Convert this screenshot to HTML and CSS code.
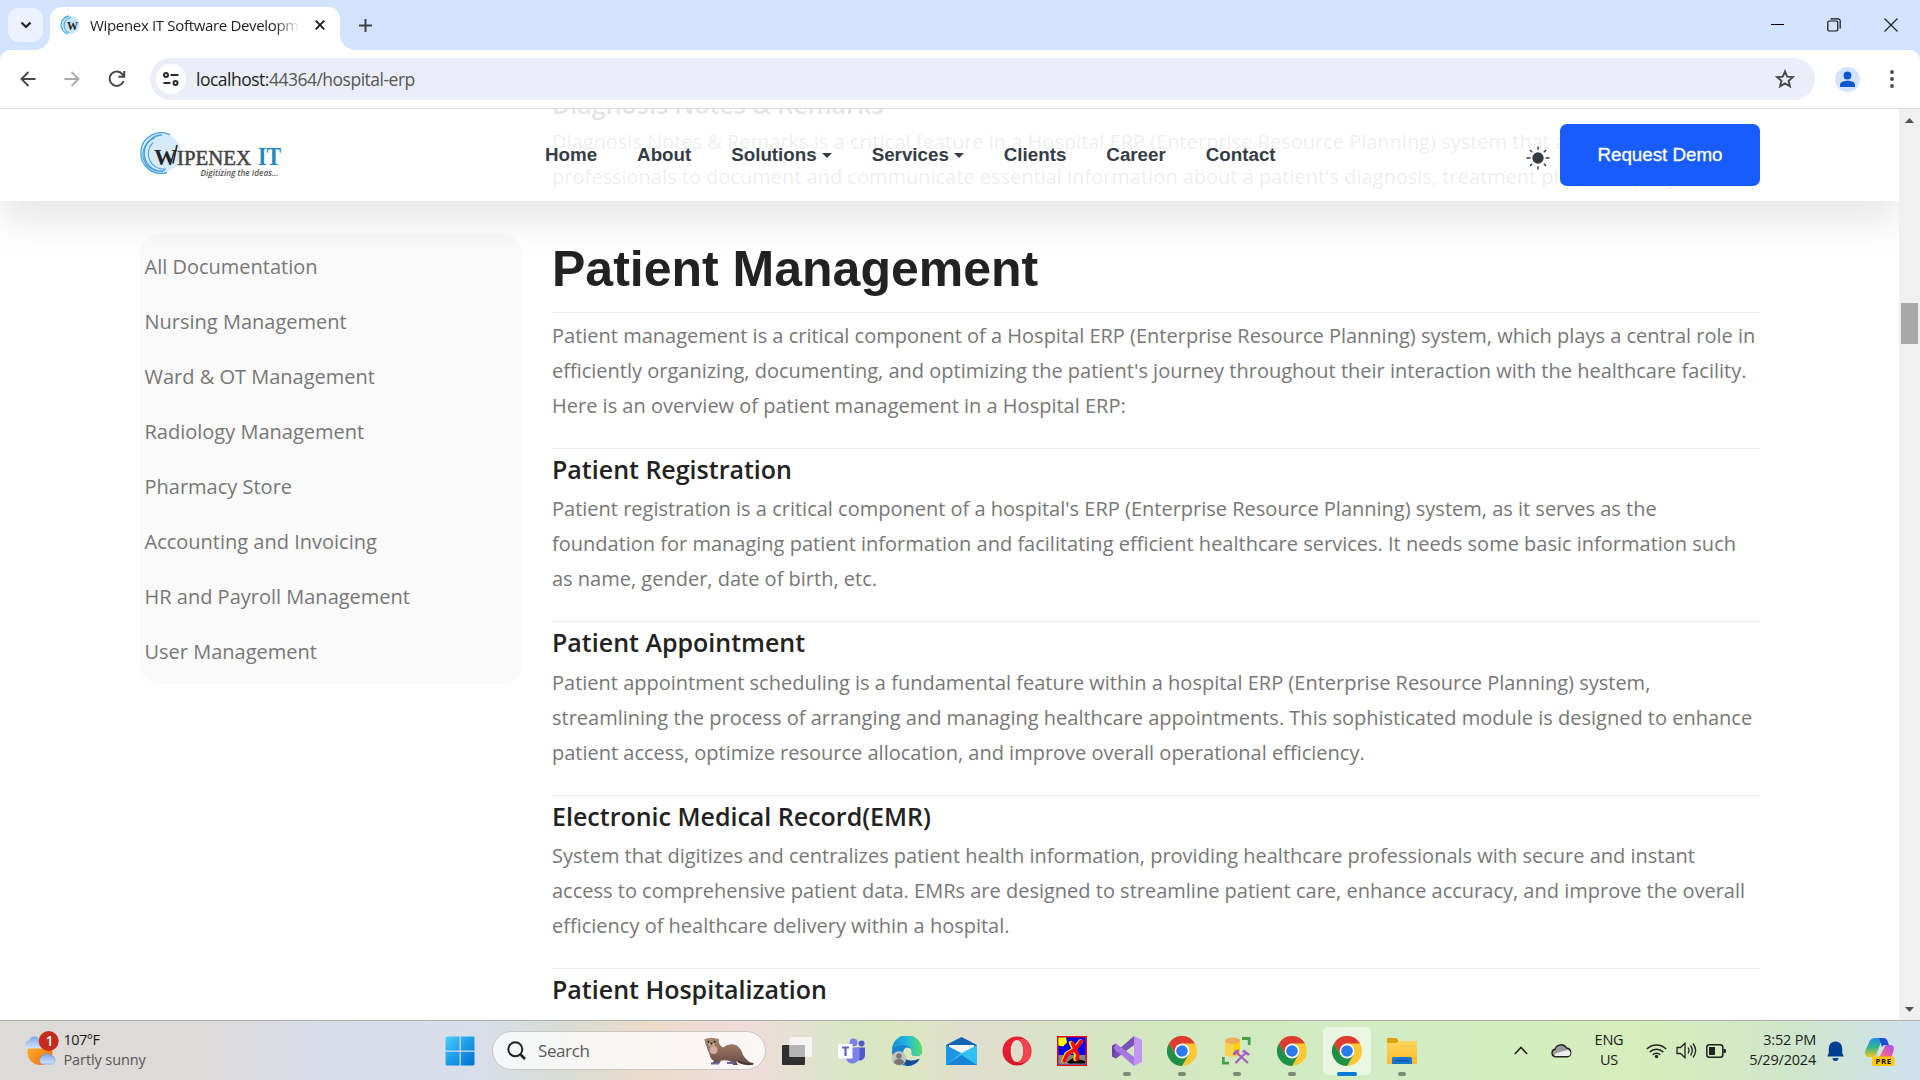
FILE: index.html
```html
<!DOCTYPE html>
<html lang="en">
<head>
<meta charset="utf-8">
<title>Wipenex IT Software Development</title>
<link rel="stylesheet" href="styles.css">
</head>
<body>
<svg width="0" height="0" class="defs">
  <defs>
    <linearGradient id="gWin" x1="0" y1="0" x2="1" y2="1"><stop offset="0" stop-color="#4cd0fc"/><stop offset=".5" stop-color="#1c9be8"/><stop offset="1" stop-color="#0070d0"/></linearGradient>
    <linearGradient id="gOpera" x1="0" y1="0" x2="1" y2="1"><stop offset="0" stop-color="#f8203a"/><stop offset=".5" stop-color="#e0182c"/><stop offset="1" stop-color="#b81020"/></linearGradient>
    <linearGradient id="gEdge" x1="0" y1="0" x2="1" y2="0"><stop offset="0" stop-color="#1a90d8"/><stop offset=".5" stop-color="#22b8dc"/><stop offset="1" stop-color="#58e060"/></linearGradient>
    <linearGradient id="gSun" x1="0" y1="0" x2="1" y2="1"><stop offset="0" stop-color="#fbb82c"/><stop offset="1" stop-color="#f06a10"/></linearGradient>
    <linearGradient id="gCloud" x1="0" y1="0" x2="0" y2="1"><stop offset="0" stop-color="#7ba6e8"/><stop offset="1" stop-color="#d3e3fb"/></linearGradient>
    <linearGradient id="gFolder" x1="0" y1="0" x2="0" y2="1"><stop offset="0" stop-color="#ffd75e"/><stop offset="1" stop-color="#fbb92a"/></linearGradient>
    <linearGradient id="gCop1" x1="0" y1="0" x2="0" y2="1"><stop offset="0" stop-color="#1f8ee8"/><stop offset=".5" stop-color="#35b58c"/><stop offset="1" stop-color="#f4c814"/></linearGradient>
    <linearGradient id="gCop2" x1="1" y1="0" x2="0" y2="1"><stop offset="0" stop-color="#a050f0"/><stop offset=".5" stop-color="#e858a8"/><stop offset="1" stop-color="#ff8a50"/></linearGradient>
    <linearGradient id="gOtter" x1="0" y1="0" x2="0" y2="1"><stop offset="0" stop-color="#ab866c"/><stop offset="1" stop-color="#654a45"/></linearGradient>
    <symbol id="chrome" viewBox="0 0 30 30">
      <circle cx="15" cy="15" r="15" fill="#fcc934"/>
      <path d="M15 15V7.5H28A15 15 0 0 0 2 7.5L8.5 18.8Z" fill="#dd3c30"/>
      <path d="M2 7.5A15 15 0 0 0 15 30L21.5 18.8 15 15 8.5 18.8Z" fill="#1e9048"/>
      <circle cx="15" cy="15" r="7.4" fill="#fff"/><circle cx="15" cy="15" r="5.8" fill="#2b79ee"/>
    </symbol>
  </defs>
</svg>

<div class="tabstrip">
  <div class="tab-search"><svg width="12" height="8" viewBox="0 0 12 8"><path d="M1.5 1.5 6 6l4.500-4.500" fill="none" stroke="#1f1f1f" stroke-width="2.200"/></svg></div>
  <div class="tab">
    <svg class="favicon" width="20" height="20" viewBox="0 0 20 20"><circle cx="10.500" cy="10" r="9" fill="#c5e6f8"/><path d="M9 .8A9.300 9.300 0 0 0 8 19M11 2.500A8 8 0 0 0 9.500 18" fill="none" stroke="#49abe0" stroke-width="1.200"/><text x="7" y="14.500" font-family="Liberation Serif" font-size="12" font-weight="bold" textLength="11" lengthAdjust="spacingAndGlyphs" fill="#222">W</text></svg>
    <span class="tab-title">Wipenex IT Software Development</span>
    <svg width="10" height="10" viewBox="0 0 10 10"><path d="M.7.700l8.600 8.600M9.300.7.7 9.300" stroke="#1f1f1f" stroke-width="1.900"/></svg>
  </div>
  <svg class="newtab" width="13" height="13" viewBox="0 0 13 13"><path d="M6.500 0v13M0 6.500h13" stroke="#3c3f43" stroke-width="1.900"/></svg>
  <div class="winbtns">
    <svg width="13" height="13" viewBox="0 0 13 13"><path d="M0 6.500h13" stroke="#000"/></svg>
    <svg width="14" height="14" viewBox="0 0 14 14" fill="none" stroke="#111" stroke-width="1.200"><rect x=".8" y="3" width="10" height="10" rx="1.500"/><path d="M3.500.8H11a2.200 2.200 0 0 1 2.200 2.200v7.500"/></svg>
    <svg width="14" height="14" viewBox="0 0 14 14"><path d="M.5.500l13 13M13.500.500l-13 13" stroke="#222" stroke-width="1.200"/></svg>
  </div>
</div>

<div class="toolbar-wrap"><div class="toolbar">
  <svg width="16" height="16" viewBox="0 0 16 16" fill="none" stroke="#45474a" stroke-width="1.900"><path d="M15.500 8H2M8.500 1 1.500 8l7 7"/></svg>
  <svg width="16" height="16" viewBox="0 0 16 16" fill="none" stroke="#a9aaac" stroke-width="1.900"><path d="M.5 8H14M7.500 1l7 7-7 7"/></svg>
  <svg width="18" height="18" viewBox="0 0 18 18" fill="none" stroke="#45474a" stroke-width="2"><path d="M15.600 11A7.200 7.200 0 1 1 14.500 4.300L16 6.200"/><path d="M16.200 1v5.800h-5.800"/></svg>
  <div class="omnibox">
    <div class="site-info"><svg width="16" height="14" viewBox="0 0 16 14" fill="none" stroke="#2a2b2d" stroke-width="2"><circle cx="3" cy="3" r="2"/><path d="M7.500 3H15.500M.5 11h7"/><circle cx="12.500" cy="11" r="2"/></svg></div>
    <span class="url">localhost:<i>44364/hospital-erp</i></span>
    <svg class="star" width="20" height="20" viewBox="0 0 20 20"><path d="M10 2.500 12.200 7.600 17.800 8.100 13.600 11.800 14.900 17.300 10 14.400 5.100 17.300 6.400 11.800 2.200 8.100 7.800 7.600Z" fill="none" stroke="#45474a" stroke-width="1.900"/></svg>
  </div>
  <svg class="avatar" width="25" height="25" viewBox="0 0 25 25"><circle cx="12.500" cy="12.500" r="12.500" fill="#d3e3fd"/><circle cx="12.500" cy="8.500" r="3.900" fill="#0b57d0"/><path d="M5 20v-2c0-3 4-4.300 7.500-4.300S20 15 20 18v2Z" fill="#0b57d0"/></svg>
  <svg class="kebab" width="4" height="18" viewBox="0 0 4 18" fill="#45474a"><circle cx="2" cy="2" r="1.900"/><circle cx="2" cy="9" r="1.900"/><circle cx="2" cy="16" r="1.900"/></svg>
</div></div>

<div class="viewport">
  <div class="page">
    <header class="site-header">
      <svg class="logo" width="146" height="50" viewBox="0 0 146 50">
        <circle cx="21.500" cy="21" r="19.500" fill="#d5ebfa"/>
        <g fill="none" stroke="#4aa3dc"><path d="M30 2.800A20.300 20.300 0 1 0 27 40.500" stroke-width="1.400"/><path d="M22 3A18 18 0 0 0 23 39.500" stroke-width="1.300"/><path d="M15 6A17 17 0 0 0 25 38.500" stroke-width="1.200"/><path d="M13 10.500A15.500 15.500 0 0 0 26 37" stroke-width="1.100"/></g>
        <path d="M33 31.500 37 13" stroke="#222" stroke-width="1.500"/>
        <text class="lg" x="14" y="32.500" font-size="24" font-weight="bold" textLength="23" lengthAdjust="spacingAndGlyphs" fill="#262626">W</text>
        <text class="lg" x="37" y="32.500" font-size="20.500" textLength="74" lengthAdjust="spacingAndGlyphs" fill="#444" stroke="#444" stroke-width=".5">IPENEX</text>
        <text class="lg" x="118" y="32.500" font-size="25" font-weight="bold" textLength="23" lengthAdjust="spacingAndGlyphs" fill="#2089c4">IT</text>
        <text x="60.500" y="43.500" font-family="Open Sans" font-size="8" font-style="italic" font-weight="600" textLength="78" lengthAdjust="spacingAndGlyphs" fill="#555">Digitizing the Ideas...</text>
      </svg>
      <nav class="nav"><a>Home</a><a>About</a><a class="drop">Solutions</a><a class="drop">Services</a><a>Clients</a><a>Career</a><a>Contact</a></nav>
      <svg class="sun" width="24" height="24" viewBox="0 0 24 24"><circle cx="12" cy="12" r="5.700" fill="#343d46"/><path d="M12 .5v3.200M12 20.300v3.200M.5 12h4M19.500 12h4M3.900 3.900l2.300 2.300M17.800 17.800l2.300 2.300M3.900 20.100l2.300-2.300M17.800 6.200l2.300-2.300" stroke="#343d46" stroke-width="1.400"/></svg>
      <a class="demo">Request Demo</a>
    </header>
    <div class="container">
      <aside class="sidebar">
        <a>All Documentation</a><a>Nursing Management</a><a>Ward &amp; OT Management</a><a>Radiology Management</a><a>Pharmacy Store</a><a>Accounting and Invoicing</a><a>HR and Payroll Management</a><a>User Management</a>
      </aside>
      <main class="content">
        <section class="previous"><h3>Diagnosis Notes &amp; Remarks</h3>
          <p>Diagnosis Notes &amp; Remarks is a critical feature in a Hospital ERP (Enterprise Resource Planning) system that allows<br>professionals to document and communicate essential information about a patient's diagnosis, treatment plan, and progress.</p></section>
        <h1>Patient Management</h1>
        <section class="intro"><p>Patient management is a critical component of a Hospital ERP (Enterprise Resource Planning) system, which plays a central role in<br>efficiently organizing, documenting, and optimizing the patient's journey throughout their interaction with the healthcare facility.<br>Here is an overview of patient management in a Hospital ERP:</p></section>
        <section><h2>Patient Registration</h2>
          <p>Patient registration is a critical component of a hospital's ERP (Enterprise Resource Planning) system, as it serves as the<br>foundation for managing patient information and facilitating efficient healthcare services. It needs some basic information such<br>as name, gender, date of birth, etc.</p></section>
        <section><h2>Patient Appointment</h2>
          <p>Patient appointment scheduling is a fundamental feature within a hospital ERP (Enterprise Resource Planning) system,<br>streamlining the process of arranging and managing healthcare appointments. This sophisticated module is designed to enhance<br>patient access, optimize resource allocation, and improve overall operational efficiency.</p></section>
        <section><h2>Electronic Medical Record(EMR)</h2>
          <p>System that digitizes and centralizes patient health information, providing healthcare professionals with secure and instant<br>access to comprehensive patient data. EMRs are designed to streamline patient care, enhance accuracy, and improve the overall<br>efficiency of healthcare delivery within a hospital.</p></section>
        <section><h2>Patient Hospitalization</h2></section>
      </main>
    </div>
  </div>
  <div class="scrollbar">
    <svg width="9" height="5" viewBox="0 0 9 5"><path d="M0 5 4.500 0 9 5Z" fill="#505050"/></svg>
    <div class="thumb"></div>
    <svg width="9" height="5" viewBox="0 0 9 5"><path d="M0 0 4.500 5 9 0Z" fill="#505050"/></svg>
  </div>
</div>

<footer class="taskbar">
  <div class="weather">
    <svg width="34" height="36" viewBox="0 0 34 36"><circle cx="15" cy="21.500" r="12.500" fill="url(#gSun)"/><path d="M4.500 17.500a4 4 0 0 1-.5-8 5.500 5.500 0 0 1 10-1.500 5 5 0 0 1 3 9.500Z" fill="url(#gCloud)"/><path d="M17 33a4 4 0 0 1 0-7.500 5.500 5.500 0 0 1 9-1 4.500 4.500 0 0 1 1.500 8.500Z" fill="url(#gCloud)" stroke="#6e98de" stroke-width=".6"/><circle cx="23.700" cy="10" r="10" fill="#c42b1c"/><text x="20.800" y="15" font-family="Open Sans" font-size="13.500" font-weight="600" fill="#fff">1</text></svg>
    <div class="weather-text"><b>107°F</b><span>Partly sunny</span></div>
  </div>
  <div class="cell"><svg width="30" height="30" viewBox="0 0 30 30" fill="url(#gWin)"><path d="M2 .5h12.500v14H.5V2Q.5.500 2 .500ZM15.700.500H28Q29.500.500 29.500 2v12.500H15.700ZM.5 15.700h14v13.800H2Q.5 29.500.5 28ZM15.700 15.700h13.800V28q0 1.500-1.500 1.500H15.700Z"/></svg></div>
  <div class="search">
    <svg width="19" height="19" viewBox="0 0 19 19" fill="none" stroke="#222" stroke-width="2"><circle cx="8.300" cy="8.300" r="7"/><path d="M13 13l5 5" stroke-width="2.600"/></svg>
    <span>Search</span>
    <svg class="otter" width="52" height="30" viewBox="0 0 52 30"><path d="M2 4Q0 2 3 1.800Q8 0 13 1.600Q17 1 15.500 4.500Q17 9 20 10.500Q26 5.500 33 8Q38 11 40 18Q44 25 51 26.500Q49 29.500 41 27.500Q36 26.500 33 24L35 28H30L27 24Q23 23 18 23.500L16 27H8L11 24Q7 22 6.500 17Q4 12 3.500 9Q2 7 2 4Z" fill="url(#gOtter)"/><ellipse cx="10.500" cy="13" rx="4" ry="4" fill="#d4aba0"/><ellipse cx="8.600" cy="7" rx="3.500" ry="2.800" fill="#bda08c"/><circle cx="5.500" cy="4.800" r=".9"/><circle cx="11.500" cy="4.800" r=".9"/><path d="M7 5.500h3L8.500 8Z" fill="#222"/><path d="M8 26.500h8M24 26h7" stroke="#6667a4" stroke-width="2.200"/><path d="M35 24q6 4 15 2.700" stroke="#463634" stroke-width="2" fill="none"/></svg>
  </div>
  <div class="cell"><svg width="30" height="30" viewBox="0 0 30 30"><rect x="0" y="9" width="23" height="20" rx="1" fill="#303030"/><rect x="7.500" y="1" width="22.500" height="20" rx="1" fill="#f5f5f5" opacity=".95"/><path d="M7.500 9H23v12H7.500Z" fill="#b5b5b5"/></svg></div>
  <div class="cell"><svg width="28" height="26" viewBox="0 0 28 26"><circle cx="15.500" cy="4.500" r="4" fill="#7b83eb"/><circle cx="23.500" cy="5.500" r="3" fill="#5059c9"/><path d="M19 9.500h8v8a5 5 0 0 1-8 4Z" fill="#5059c9"/><path d="M8 9.500h13.500v9a7 7 0 0 1-13 3.500Z" fill="#7b83eb"/><rect y="6" width="14.500" height="14.500" fill="#fff"/><path d="M4 9.500h7M7.500 9.500v8.500" stroke="#6264c7" stroke-width="2.200"/></svg></div>
  <div class="cell"><svg width="30" height="30" viewBox="0 0 30 30"><path d="M0 15A15 15 0 0 1 30 15q0 5-5.500 5-5 0-4.800-2.500 1-6-4.700-6Q11 12 11 18q1 8 9 8 4 0 8-3-5 7-13 7A15 15 0 0 1 0 15Z" fill="#1583cf"/><path d="M0 13A15 15 0 0 1 30 15q0 5-5.500 5-5 0-4.800-2.500 1-6.500-5.700-8Q6 8 0 13Z" fill="url(#gEdge)"/><path d="M11 16q-1 7 7 8.500 5 .5 9.500-2Q24 30 15 30q-6-4-4-14Z" fill="#124f96"/><circle cx="7" cy="22.500" r="7.200" fill="#c4c4c4"/><circle cx="7" cy="20" r="2.800" fill="#777"/><path d="M2 27q0-4 5-4t5 4q-5 4-10 0Z" fill="#777"/></svg></div>
  <div class="cell"><svg width="31" height="28" viewBox="0 0 31 28"><path d="M0 8 15.500 0 31 8v8H0Z" fill="#1265b5"/><path d="M3 8h25v12H3Z" fill="#f4f7fa"/><path d="M0 8 18 17.500 31 28H0Z" fill="#1e96e6"/><path d="M31 8 13 17.500 0 28h31Z" fill="#32bff2"/><path d="M0 28 15.500 18 31 28Z" fill="#1784d4"/></svg></div>
  <div class="cell"><svg width="30" height="30" viewBox="0 0 30 30"><path fill-rule="evenodd" d="M15 .5a14.500 14.500 0 1 0 0 29 14.500 14.500 0 0 0 0-29ZM15 4c4 0 6.300 5 6.300 11S19 26 15 26 8.700 21 8.700 15 11 4 15 4Z" fill="url(#gOpera)"/><path d="M15 3.500c4 0 6.300 5 6.300 11.500S19 26.500 15 26.500q6 2 10-1.500 4-4 4-10T25 5Q21 1.500 15 3.500Z" fill="#f64450"/></svg></div>
  <div class="cell"><svg width="30" height="30" viewBox="0 0 30 30"><rect x=".7" y=".7" width="28.600" height="28.600" fill="#0000f0" stroke="#f00" stroke-width="1.400"/><path d="M1.400 19h27.200v9.600H1.400Z" fill="#858585"/><path d="M1.400 1.400H9l1 5-4 4-4.600-1Z" fill="#ff0"/><path d="M10 26l6-4 12 3v2.500H12Z" fill="#000"/><g fill="none" stroke-linecap="round" stroke-linejoin="round"><path d="M14 7l2.500 5M23.500 5.500 17 13.500 9.500 18 6.500 25M16 13.500l3.500 5-1 4.500" stroke="#ffe800" stroke-width="4.500"/><path d="M15.500 7l2 5M24 5.500 18 13.500 10.500 18 7 25M17.500 13.500l3.500 5-1 4.500" stroke="#f00" stroke-width="3.600"/></g></svg></div>
  <div class="cell open"><svg width="30" height="30" viewBox="0 0 30 30"><path d="M0 9 3 7.500 22 0v8L4 22.500 0 20.500Z" fill="#6c45a0" opacity="0"/><path d="M0 9.500 4 7.500v15L0 20.500Z" fill="#6c45a0"/><path d="M4 22.500 22 9V0L2 17.500Z" fill="#7b50b5"/><path d="M4 7.500 22 21v9L2 12.500Z" fill="#a677e2"/><path d="M22 0 30 4v22l-8 4Z" fill="#c493f6"/></svg></div>
  <div class="cell open"><svg width="30" height="30"><use href="#chrome"/></svg></div>
  <div class="cell open"><svg width="29" height="28" viewBox="0 0 29 28"><path d="M3 4v14q7 4 15 0V4Z" fill="#fbd34b"/><path d="M12 5h6v9l-4 4-2 1Z" fill="#fdd000"/><ellipse cx="10.500" cy="3.800" rx="7.500" ry="3.200" fill="#eeaa5a"/><path d="M20 1.500h7.200V8M7 26.200H1.300V20" fill="none" stroke="#46a046" stroke-width="2.800"/><path d="M13.500 26 24 15.500M15 16l11 10" stroke="#a55cc5" stroke-width="2.200"/><path d="M12 18q1-4 5-4M21 13.500l6 4.500" stroke="#a55cc5" stroke-width="2.800" fill="none"/></svg></div>
  <div class="cell open"><svg width="30" height="30"><use href="#chrome"/></svg></div>
  <div class="cell open active"><svg width="30" height="30"><use href="#chrome"/></svg></div>
  <div class="cell open"><svg width="30" height="28" viewBox="0 0 30 28"><path d="M0 8V2q0-1 1-1h8l3 3h17q1 0 1 1v5H0Z" fill="#dca000"/><path d="M0 6h9l3-2h17q1 0 1 1v22H0Z" fill="url(#gFolder)"/><path d="M5 27v-5q0-2 2-2h16q2 0 2 2v5Z" fill="#1576cc"/><path d="M8.500 23.700h13" stroke="#0b4e94" stroke-width="1.300"/></svg></div>
  <div class="tray">
    <div class="slot chev"><svg width="14" height="9" viewBox="0 0 14 9"><path d="M.8 8 7 1.500 13.200 8" fill="none" stroke="#222" stroke-width="1.600"/></svg></div>
    <div class="slot cloud"><svg width="21" height="15" viewBox="0 0 21 15"><path d="M4.500 13.800a3.800 3.800 0 0 1-.5-7.500A6.300 6.300 0 0 1 15.500 5a4.500 4.500 0 0 1 1 8.800Z" fill="#9b9b9b" stroke="#222" stroke-width="1.400"/><path d="M3.500 13q0-3 4-3.500l9-2.500q3 1 3 3.500-.5 2.500-3 2.600Z" fill="#eee"/></svg></div>
    <div class="lang"><span>ENG</span><span>US</span></div>
    <div class="slot"><svg width="21" height="16" viewBox="0 0 21 16" fill="none" stroke="#222" stroke-width="1.500"><path d="M.8 6a13.700 13.700 0 0 1 19.400 0M3.700 9a9.600 9.600 0 0 1 13.600 0M6.700 11.800a5.400 5.400 0 0 1 7.600 0"/><circle cx="10.500" cy="13.500" r="1.700" fill="#222" stroke="none"/></svg></div>
    <div class="slot"><svg width="21" height="17" viewBox="0 0 21 17" fill="none" stroke="#222" stroke-width="1.300"><path d="M1 5.500h3.500L9 1.300v14.400l-4.500-4.200H1Z"/><path d="M12 5.500q2 3 0 6M14.500 3.500q3.600 5 0 10M17 1.500q5.300 7 0 14"/></svg></div>
    <div class="slot"><svg width="20" height="14" viewBox="0 0 20 14"><rect x=".8" y=".8" width="16" height="12.400" rx="2.500" fill="none" stroke="#222" stroke-width="1.500"/><path d="M3 3h6v8H3ZM17.500 4.500 20 5.500v3L17.500 9.500Z" fill="#222"/></svg></div>
    <div class="clock"><span>3:52 PM</span><span>5/29/2024</span></div>
    <div class="slot bell"><svg width="17" height="20" viewBox="0 0 17 20" fill="#003e92"><path d="M8.500.500a6.500 6.500 0 0 1 6.700 6.500v5l1.600 3.500H.2L1.800 12V7A6.500 6.500 0 0 1 8.500.500ZM5.500 17h6a3 3 0 0 1-6 0Z"/></svg></div>
    <svg class="copilot" width="30" height="30" viewBox="0 0 30 30"><path d="M1 19Q-1 17 1 12L5 3.500Q6.500 1 9 1h9q2 0 2.500 2l-2 .5q-2 0-3 3L11.500 17q-1 3-4 3H3Q1.500 20 1 19Z" fill="url(#gCop1)"/><path d="M14 1h4.500q3 0 4 3l1.500 4h-4q-2 0-3 2Z" fill="#1b4fd0"/><path d="M19 11q1-3 3.500-3H26q4 1 2.500 6L26 21H10.500q4 0 5.500-4Z" fill="url(#gCop2)"/><rect x="7" y="19.500" width="22.500" height="9.500" rx="2" fill="#fcc800"/><text x="10.500" y="27" font-family="Open Sans" font-size="7.800" font-weight="bold" textLength="15.500" fill="#111">PRE</text></svg>
  </div>
</footer>
</body>
</html>
```
FILE: styles.css
```css
* { box-sizing: border-box; }
body {
  margin: 0;
  width: 1920px;
  height: 1080px;
  overflow: hidden;
  display: flex;
  flex-direction: column;
  background: #fff;
  font-family: "Open Sans", "Noto Sans", sans-serif;
}
svg { display: block; flex: none; }
.defs { position: absolute; }

/* Browser frame */
.tabstrip { height: 50px; flex: none; display: flex; align-items: flex-start; background: #d3e2fd; }
.tab-search {
  width: 35px; height: 34px; margin: 8px 7px 0 8px;
  border-radius: 11px; background: #ebf1fe;
  display: flex; align-items: center; justify-content: center;
}
.tab {
  width: 290px; height: 43px; margin-top: 7px; padding: 0 15px 7px 10px;
  display: flex; align-items: center;
  background: #fff; border-radius: 12px 12px 0 0; position: relative;
}
.tab::before, .tab::after {
  content: ""; position: absolute; bottom: 0; width: 15px; height: 15px;
}
.tab::before { left: -15px; background: radial-gradient(circle at 0 0, transparent 14.5px, #fff 15px); }
.tab::after { right: -15px; background: radial-gradient(circle at 100% 0, transparent 14.5px, #fff 15px); }
.tab-title {
  width: 210px; margin: 0 15px 0 10px; overflow: hidden; white-space: nowrap;
  font-size: 15px; letter-spacing: -0.33px; color: #1f1f1f;
  -webkit-mask-image: linear-gradient(90deg, #000 185px, transparent 210px);
  mask-image: linear-gradient(90deg, #000 185px, transparent 210px);
}
.newtab { margin: 19px 0 0 19px; }
.winbtns { margin: 18px 22px 0 auto; display: flex; gap: 43px; }
.toolbar-wrap { height: 59px; flex: none; background: #d3e2fd; }
.toolbar {
  height: 59px; padding: 0 26px 0 20px; border-bottom: 1px solid #dcdddf;
  border-radius: 10px 10px 0 0; background: #fff;
  display: flex; align-items: center;
}
.toolbar > svg + svg { margin-left: 28px; }
.omnibox {
  width: 1665px; height: 42px; margin-left: 24px; padding: 0 20px 0 6px;
  border-radius: 21px; background: #ebeef8; display: flex; align-items: center;
}
.site-info { width: 30px; height: 30px; border-radius: 50%; background: #fff; display: flex; align-items: center; justify-content: center; }
.url { margin-left: 10px; font-size: 17.5px; letter-spacing: -0.5px; color: #1f1f1f; }
.url i { font-style: normal; color: #555; }
.star { margin-left: auto; }
.avatar { margin-left: 20px; }
.toolbar > .kebab { margin-left: auto; }

/* Web page */
.viewport { height: 911px; flex: none; display: flex; }
.page { width: 1899px; position: relative; overflow: hidden; }
.site-header {
  position: absolute; top: 0; left: 0; right: 0; z-index: 2; height: 92px;
  padding: 0 139px 0 140px; display: flex; align-items: center;
  background: rgba(255, 255, 255, 0.88);
  box-shadow: 0 20px 40px rgba(0, 0, 0, 0.1);
}
.logo { margin-top: 3px; }
.lg { font-family: "Liberation Serif", serif; }
.nav { display: flex; gap: 40px; margin-left: 259px; font: bold 18.750px "Liberation Sans", sans-serif; color: #343d46; }
.nav a { display: flex; align-items: center; }
.drop::after { content: ""; margin-left: 5px; border: 5.500px solid transparent; border-top-color: #343d46; border-bottom: 0; }
.sun { margin: 5px 10px 0 auto; }
.demo {
  width: 200px; height: 62px; border-radius: 7px; background: #185cff; color: #fff;
  display: flex; align-items: center; justify-content: center;
  font: 18.750px "Liberation Sans", sans-serif; -webkit-text-stroke: 0.3px #fff;
}
.container { display: flex; align-items: flex-start; padding-left: 140px; }
.sidebar {
  width: 382px; height: 450px; margin: 125px 30px 0 0; padding: 5px 0 0 4.500px;
  border-radius: 20px; background: #fafafa;
}
.sidebar a { display: block; line-height: 55px; font-size: 20px; color: #777; }
.content { width: 1208px; margin-top: -20px; white-space: nowrap; }
.content p { margin: 0; font-size: 20px; line-height: 35px; color: #777; }
.content h2, .content h3 { margin: 0; padding-top: 5px; height: 42.400px; line-height: 30px; font-size: 25px; font-weight: 600; color: #222; }
.content h3 { height: 35px; padding-top: 0; }
.content h1 { margin: 0; height: 118px; padding-top: 45px; font: bold 50px/60px "Liberation Sans", sans-serif; color: #222; }
.content section { border-top: 1px solid #ebebeb; padding-bottom: 25px; }
.content .previous { border: 0; padding: 0; }
.content .intro { padding-top: 5px; }
.scrollbar { width: 21px; background: #f0f0f0; display: flex; flex-direction: column; align-items: center; padding: 9px 0 8px; }
.thumb { width: 17px; height: 41px; margin: 180px 0 auto; background: #a8a8a8; }

/* Taskbar */
.taskbar {
  height: 60px; flex: none; display: flex; align-items: center; border-top: 1px solid #adb0ad;
  background: linear-gradient(90deg, #dddbd8 0, #dddad9 200px, #d8dde8 320px, #d8dfea 480px, #d8dcd4 565px, #ecdccb 650px, #f0dcdb 745px, #d8e6c6 850px, #dce6c0 900px, #e0decf 970px, #dae2c8 1050px, #d2e8c0 1160px, #d2edc5 1400px, #d6eebb 1640px, #d0e6cc 1800px, #cfe1ee 1920px);
}
.weather { width: 432px; padding-left: 25px; display: flex; align-items: center; }
.weather svg { margin-top: -3px; }
.weather-text { margin: -2px 0 0 4.500px; display: flex; flex-direction: column; font-size: 14.500px; line-height: 20px; letter-spacing: -0.1px; color: #555; }
.weather-text b { font-weight: 400; color: #1b1b1b; letter-spacing: -0.5px; }
.cell { width: 55px; height: 48px; flex: none; display: flex; align-items: center; justify-content: center; position: relative; }
.cell.open::after { content: ""; position: absolute; bottom: -1px; left: 23.500px; width: 8px; height: 4px; border-radius: 2px; background: #7c8974; }
.cell.active { width: 48px; margin: 0 3.500px; background: rgba(255, 255, 255, 0.5); border-radius: 5px; }
.cell.active::after { left: 14px; width: 20px; background: #0078d4; }
.search {
  width: 274px; height: 39px; flex: none; margin: 0 3px 0 5px; padding: 0 10px 0 14px;
  display: flex; align-items: center; border-radius: 20px;
  border: 1px solid #c9c5c1; background: rgba(255, 255, 255, 0.75); color: #5a5a5a; font-size: 17px;
}
.search span { margin-left: 12px; letter-spacing: -0.4px; }
.otter { margin: 2px 0 0 auto; }
.tray { margin-left: auto; padding-right: 25px; display: flex; align-items: center; color: #1b1b1b; font-size: 14.500px; line-height: 20px; letter-spacing: -0.2px; }
.slot { width: 30px; display: flex; justify-content: center; }
.chev, .cloud { width: 40px; }
.lang { width: 56px; margin: -1px 4px 0 0; display: flex; flex-direction: column; align-items: center; }
.clock { width: 85px; margin-top: -1px; display: flex; flex-direction: column; align-items: flex-end; }
.bell { margin: 0 15px 0 4px; }
.copilot { margin-top: 2px; }
```
